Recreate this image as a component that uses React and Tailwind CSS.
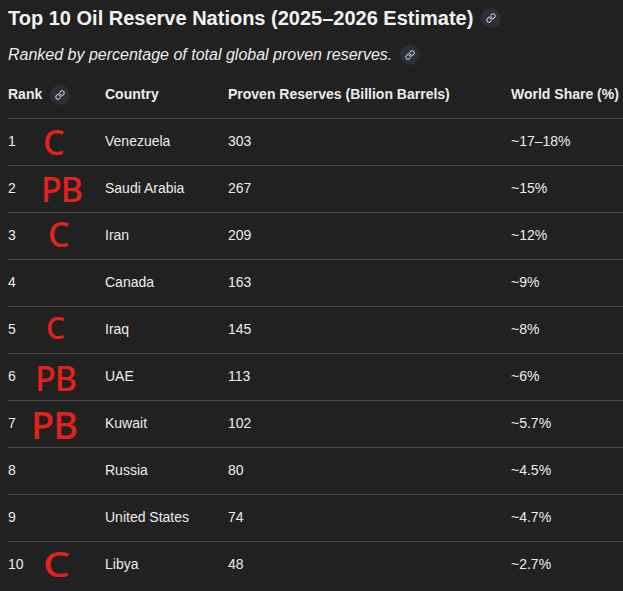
import { Link } from 'lucide-react'

const rows = [
  { rank: 1, country: 'Venezuela', reserves: '303', share: '~17–18%', mark: { text: 'C', cls: 'left-[35px] top-[6px] text-[34px]' } },
  { rank: 2, country: 'Saudi Arabia', reserves: '267', share: '~15%', mark: { text: 'PB', cls: 'left-[33px] top-[6px] text-[34px]' } },
  { rank: 3, country: 'Iran', reserves: '209', share: '~12%', mark: { text: 'C', cls: 'left-[40px] top-[4px] text-[34px]' } },
  { rank: 4, country: 'Canada', reserves: '163', share: '~9%' },
  { rank: 5, country: 'Iraq', reserves: '145', share: '~8%', mark: { text: 'C', cls: 'left-[38px] top-[6px] text-[30px]' } },
  { rank: 6, country: 'UAE', reserves: '113', share: '~6%', mark: { text: 'PB', cls: 'left-[27px] top-[7px] text-[34px]' } },
  { rank: 7, country: 'Kuwait', reserves: '102', share: '~5.7%', mark: { text: 'PB', cls: 'left-[23px] top-[4px] text-[38px]' } },
  { rank: 8, country: 'Russia', reserves: '80', share: '~4.5%' },
  { rank: 9, country: 'United States', reserves: '74', share: '~4.7%' },
  { rank: 10, country: 'Libya', reserves: '48', share: '~2.7%', mark: { text: 'C', cls: 'left-[35px] top-[5px] text-[34px] scale-x-125 origin-left' } },
]

function AnchorLink() {
  return (
    <span className="ml-2 inline-flex h-5 w-5 items-center justify-center rounded-full bg-[#2c2e3a] align-middle">
      <Link className="h-[10px] w-[10px] text-[#c9cad3]" strokeWidth={2.5} />
    </span>
  )
}

export default function App() {
  return (
    <div className="h-[591px] w-[623px] overflow-hidden bg-[#212121] px-2 pt-1 font-['Liberation_Sans',Arial,sans-serif] text-[#ececec]">
      <h2 className="flex items-center text-[20px] font-bold leading-[28px] text-[#f2f2f2]">
        Top 10 Oil Reserve Nations (2025–2026 Estimate)
        <AnchorLink />
      </h2>
      <p className="mt-[11px] flex items-center text-[16px] italic leading-6">
        Ranked by percentage of total global proven reserves.
        <AnchorLink />
      </p>

      <table className="mt-[5px] w-[640px] table-fixed border-collapse text-left text-[14px]">
        <colgroup>
          <col className="w-[97px]" />
          <col className="w-[123px]" />
          <col className="w-[283px]" />
          <col />
        </colgroup>
        <thead>
          <tr className="h-[46px] border-b border-[#4a4a4a]">
            <th className="p-0 font-bold">
              <span className="inline-flex items-center">
                Rank
                <AnchorLink />
              </span>
            </th>
            <th className="p-0 font-bold">Country</th>
            <th className="p-0 font-bold">Proven Reserves (Billion Barrels)</th>
            <th className="p-0 font-bold">World Share (%)</th>
          </tr>
        </thead>
        <tbody>
          {rows.map((row) => (
            <tr key={row.rank} className="h-[47px] border-b border-[#4a4a4a] last:border-b-0">
              <td className="relative p-0">
                {row.rank}
                {row.mark && (
                  <span
                    className={`absolute font-['Noto_Sans',sans-serif] font-medium leading-none tracking-[-1px] text-[#e4211d] ${row.mark.cls}`}
                  >
                    {row.mark.text}
                  </span>
                )}
              </td>
              <td className="p-0">{row.country}</td>
              <td className="p-0">{row.reserves}</td>
              <td className="p-0">{row.share}</td>
            </tr>
          ))}
        </tbody>
      </table>
    </div>
  )
}
